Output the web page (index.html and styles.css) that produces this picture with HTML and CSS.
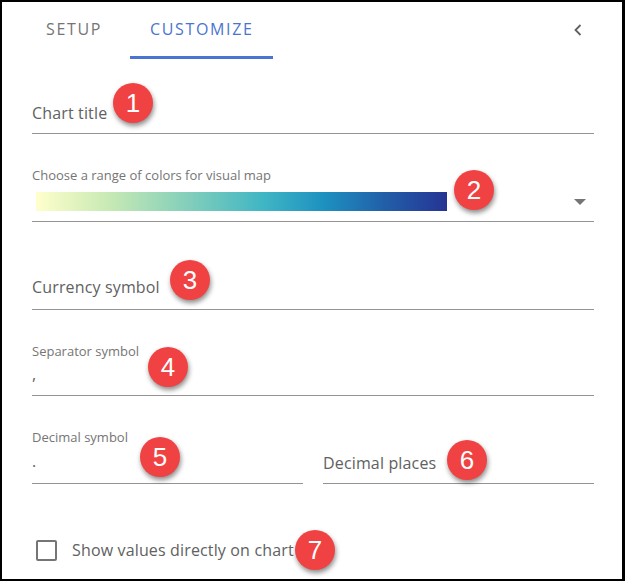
FILE: index.html
```html
<!DOCTYPE html>
<html>
<head>
<meta charset="utf-8">
<link rel="stylesheet" href="styles.css">
</head>
<body>
<div class="panel">
  <div class="tabs">
    <div class="tab tab-setup">SETUP</div>
    <div class="tab tab-active">CUSTOMIZE</div>
    <div class="tab-spacer"></div>
    <svg class="chevron" width="12" height="14" viewBox="0 0 12 14"><path d="M8.5 2 L3.5 7 L8.5 12" fill="none" stroke="#616161" stroke-width="1.8"/></svg>
  </div>
  <div class="form">
    <div class="field f-title"><div class="value placeholder">Chart title</div></div>
    <div class="field f-select">
      <div class="label">Choose a range of colors for visual map</div>
      <div class="select-row">
        <div class="gradient"></div>
        <svg class="caret" width="12" height="6" viewBox="0 0 12 6"><path d="M0 0 L12 0 L6 6 Z" fill="#757575"/></svg>
      </div>
    </div>
    <div class="field f-currency"><div class="value placeholder">Currency symbol</div></div>
    <div class="field f-sep">
      <div class="label">Separator symbol</div>
      <div class="value">,</div>
    </div>
    <div class="row">
      <div class="field f-dec">
        <div class="label">Decimal symbol</div>
        <div class="value">.</div>
      </div>
      <div class="field f-places"><div class="value placeholder">Decimal places</div></div>
    </div>
    <div class="check-row">
      <span class="checkbox"></span>
      <span class="check-label">Show values directly on chart</span>
    </div>
  </div>
  <div class="badge b1">1</div>
  <div class="badge b2">2</div>
  <div class="badge b3">3</div>
  <div class="badge b4">4</div>
  <div class="badge b5">5</div>
  <div class="badge b6">6</div>
  <div class="badge b7">7</div>
</div>
</body>
</html>
```
FILE: styles.css
```css
* { box-sizing: border-box; }
html, body { margin: 0; padding: 0; background: #fff; }
body { font-family: "Open Sans", "Liberation Sans", sans-serif; }
.panel {
  position: relative;
  width: 625px;
  height: 581px;
  border: 2px solid #000;
  border-right-width: 3px;
  background: #fff;
  overflow: hidden;
}
.tabs {
  display: flex;
  align-items: stretch;
  height: 57px;
}
.tab {
  font-size: 16px;
  letter-spacing: 1.65px;
  line-height: 20px;
  padding-top: 17px;
  border-bottom: 2px solid transparent;
}
.tab-setup {
  color: #757575;
  margin-left: 24px;
  padding-left: 20px;
  padding-right: 28px;
}
.tab-active {
  color: #4a74d1;
  border-bottom: 3px solid #4a74d1;
  padding-left: 20px;
  padding-right: 20px;
  width: 143px;
}
.tab-spacer { flex: 1; }
.chevron { margin-top: 21px; margin-right: 38px; }
.form {
  padding: 0 28px 0 30px;
}
.field {
  border-bottom: 1px solid #949494;
  padding-bottom: 8px;
}
.value {
  font-size: 16px;
  line-height: 24px;
  letter-spacing: 0.15px;
  color: #616161;
  min-height: 24px;
}
.label {
  font-size: 13px;
  line-height: 16px;
  color: #757575;
}
.f-title { margin-top: 42px; }
.f-select { margin-top: 33px; padding-bottom: 10px; }
.select-row {
  display: flex;
  align-items: center;
  margin-top: 9px;
  height: 19px;
}
.gradient {
  width: 411px;
  height: 19px;
  margin-left: 4px;
  background: linear-gradient(to right, #ffffcc 0%, #c7e9b4 18%, #7fcdbb 38%, #41b6c4 55%, #1d91c0 70%, #225ea8 85%, #253494 100%);
}
.caret { margin-left: auto; margin-right: 8px; margin-top: 0; }
.f-currency { margin-top: 53px; padding-bottom: 10px; }
.f-sep { margin-top: 33px; padding-bottom: 9px; }
.f-sep .value { margin-top: 3px; }
.row {
  display: flex;
  align-items: flex-end;
  gap: 20px;
  margin-top: 33px;
}
.row .field { flex: 1; }
.f-dec { padding-bottom: 10px; }
.f-dec .value { margin-top: 4px; }
.check-row {
  display: flex;
  align-items: center;
  margin-top: 54px;
  height: 24px;
}
.checkbox {
  width: 21px;
  height: 21px;
  border: 2px solid #757575;
  border-radius: 2px;
  margin-left: 4px;
}
.check-label {
  margin-left: 15px;
  font-size: 16px;
  line-height: 24px;
  letter-spacing: 0.15px;
  color: #616161;
}
.badge {
  position: absolute;
  width: 40px;
  height: 40px;
  border-radius: 50%;
  background: #f04242;
  color: #fff;
  font-family: "Liberation Sans", Arial, sans-serif;
  font-size: 26px;
  line-height: 40px;
  text-align: center;
  box-shadow: 1px 3px 5px rgba(0,0,0,0.45);
}
.b1 { left: 111px; top: 81px; }
.b2 { left: 452px; top: 168px; }
.b3 { left: 168px; top: 258px; }
.b4 { left: 146px; top: 345px; }
.b5 { left: 138px; top: 435px; }
.b6 { left: 445px; top: 438px; }
.b7 { left: 293px; top: 528px; }
```
